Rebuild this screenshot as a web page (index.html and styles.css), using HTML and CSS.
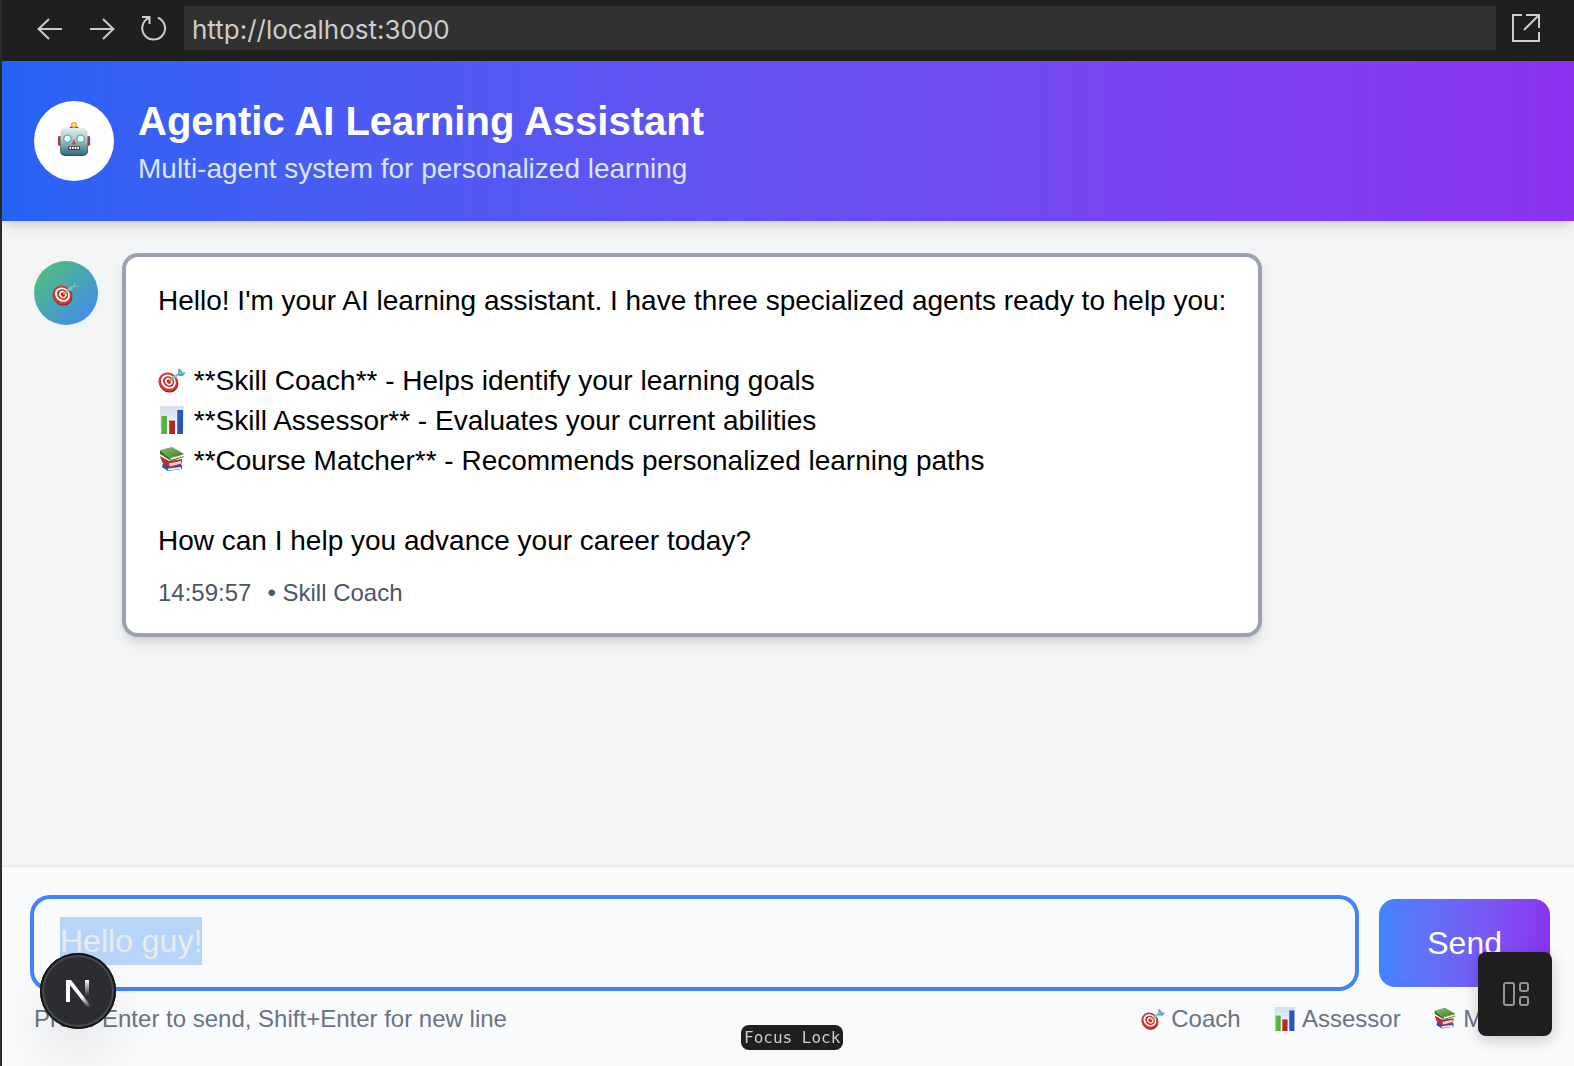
FILE: index.html
```html
<!DOCTYPE html>
<html lang="en">
<head>
<meta charset="utf-8">
<title>Agentic AI Learning Assistant</title>
<link rel="stylesheet" href="styles.css">
</head>
<body>
<svg class="sprite" aria-hidden="true">
  <defs>
    <linearGradient id="face" x1="0" y1="0" x2="0" y2="1"><stop offset="0" stop-color="#e0f0ec"/><stop offset=".45" stop-color="#a5c5c8"/><stop offset="1" stop-color="#2f6b78"/></linearGradient>
    <linearGradient id="sheet" x1="0" y1="0" x2="0" y2="1"><stop offset="0" stop-color="#d5e0ec"/><stop offset="1" stop-color="#fafcff"/></linearGradient>
    <linearGradient id="cover" x1="0" y1="0" x2="1" y2="1"><stop offset="0" stop-color="#8ac26c"/><stop offset="1" stop-color="#377b28"/></linearGradient>
    <radialGradient id="bulb"><stop offset="0" stop-color="#fff5a0"/><stop offset="1" stop-color="#f09a28"/></radialGradient>
    <linearGradient id="diag" gradientUnits="userSpaceOnUse" x1="28" y1="30" x2="50" y2="54"><stop offset=".6" stop-color="#fff"/><stop offset="1" stop-color="#fff" stop-opacity="0"/></linearGradient>
    <linearGradient id="stem" x1="0" y1="0" x2="0" y2="1"><stop offset="0" stop-color="#fff"/><stop offset="1" stop-color="#fff" stop-opacity="0"/></linearGradient>
  </defs>
  <symbol id="robot" viewBox="0 0 32 34">
    <ellipse cx="16" cy="6" rx="4.400" ry="2" fill="#5c4580"/>
    <circle cx="16" cy="3" r="3" fill="url(#bulb)"/>
    <rect x="0" y="14" width="4" height="10" rx="1.400" fill="#b8323a"/>
    <rect x="28" y="14" width="4" height="10" rx="1.400" fill="#b8323a"/>
    <rect x="2" y="13" width="28" height="21" rx="5" fill="#265965"/>
    <rect x="2.400" y="6" width="27.200" height="27" rx="5" fill="url(#face)"/>
    <circle cx="9.400" cy="16.800" r="4.400" fill="#4fb0cf"/><circle cx="22.600" cy="16.800" r="4.400" fill="#4fb0cf"/>
    <circle cx="9.400" cy="16.800" r="3" fill="#fff"/><circle cx="22.600" cy="16.800" r="3" fill="#fff"/>
    <path d="M16 17 18.500 22.500h-5z" fill="#cc4a43"/>
    <rect x="10" y="24" width="12" height="4" rx="1.500" fill="#41302f"/>
    <path d="M11.400 24.700h1.800v2.400h-1.800zM14 24.700h1.800v2.400H14zM16.600 24.700h1.800v2.400h-1.800zM19.200 24.700H21v2.400h-1.800z" fill="#fff"/>
  </symbol>
  <symbol id="target" viewBox="0 0 28 28">
    <ellipse cx="10.600" cy="17" rx="10" ry="9.300" transform="rotate(38 10.600 17)" fill="#8f1b20"/>
    <ellipse cx="10.200" cy="16" rx="10" ry="9.200" transform="rotate(38 10.200 16)" fill="#d03a36"/>
    <ellipse cx="10.400" cy="15.600" rx="7.800" ry="6.800" transform="rotate(38 10.400 15.600)" fill="#fff"/>
    <ellipse cx="10.600" cy="15.600" rx="5.900" ry="5.100" transform="rotate(38 10.600 15.600)" fill="#c92f30"/>
    <ellipse cx="10.800" cy="15.600" rx="4" ry="3.300" transform="rotate(38 10.800 15.600)" fill="#fff"/>
    <ellipse cx="10.900" cy="15.600" rx="2.400" ry="2" transform="rotate(38 10.900 15.600)" fill="#c32a2d"/>
    <path d="m11.500 15.300 5.400-4.500" stroke="#d9a03d" stroke-width="1.800"/>
    <path d="m15.300 13.600-1.500-2.200 6.600-5L22 8.700z" fill="#70cbd0"/>
    <path d="m20 7.200.7-5L23.400 4l.6 2.100 3.800.5-2.600 3.200-4 .1z" fill="#4e9ca7"/>
    <path d="m20.700 8 6-1.400M21 7.700l2-4" stroke="#9adce0" stroke-width=".8"/>
  </symbol>
  <symbol id="chart" viewBox="0 0 28 28">
    <path d="M2 0h24v28H2z" fill="url(#sheet)"/>
    <path d="M2 5h24M2 10h24M2 15h24M2 20h24" stroke="#d4dfe8" stroke-width=".6"/>
    <path d="M3 10h6v18H3z" fill="#55b33b"/><path d="M11 14.600h6V28h-6z" fill="#b32724"/><path d="M19 4h6v24h-6z" fill="#2559b5"/>
    <path d="M3 10h1v18H3z" fill="#82ce65"/><path d="M11 14.600h1V28h-1z" fill="#d34b3d"/><path d="M19 4h1v24h-1z" fill="#4b83cf"/>
  </symbol>
  <symbol id="books" viewBox="0 0 28 28">
    <path d="m5 17 12 2 7 0v4l-14 2-6-4z" fill="#2d529b"/>
    <path d="m10 22.500 13-1.500v2l-13 1.500z" fill="#e9edf5"/>
    <path d="m2 10 9 5 13-2v2l-1 4-12 3-7-6z" fill="#b72e35"/>
    <path d="m11 17.500 12-2.500v2.500L12 20.500z" fill="#e8e6e8"/>
    <path d="m12 19 11-2.500" stroke="#b4b1bb" stroke-width=".6"/>
    <path d="m2 4 10 8 13-4v2l1 1-13 4L2 8z" fill="#396f27"/>
    <path d="m12.500 12 12.500-3.500v2l-12.500 3.500z" fill="#f5f3df"/>
    <path d="M2 4 14 1l12 7-14 4z" fill="url(#cover)"/>
  </symbol>
</svg>

<div class="window">
  <nav class="toolbar" aria-label="Browser">
    <button class="tool" type="button" aria-label="Back"><svg width="32" height="32" viewBox="0 0 32 32"><path d="M28 17H4.600M15 7 4.600 17 15 27"/></svg></button>
    <button class="tool" type="button" aria-label="Forward"><svg width="32" height="32" viewBox="0 0 32 32"><path d="M4 17h23.400M17 7l10.400 10L17 27"/></svg></button>
    <button class="tool" type="button" aria-label="Reload"><svg width="32" height="32" viewBox="0 0 32 32"><path d="M4 5h7.500v7M11.500 5.600A11.400 11.400 0 1 0 19.800 5.600"/></svg></button>
    <input class="address" type="text" aria-label="Address" value="http://localhost:3000">
    <button class="tool tool-open" type="button" aria-label="Open in browser"><svg width="32" height="32" viewBox="0 0 32 32"><path d="M12 3H3v26h26V20M16 3h13v13M28.500 3.500 14 18"/></svg></button>
  </nav>

  <div class="app">
    <header class="banner">
      <span class="logo"><svg width="32" height="34"><use href="#robot"/></svg></span>
      <div>
        <h1 class="title">Agentic AI Learning Assistant</h1>
        <p class="subtitle">Multi-agent system for personalized learning</p>
      </div>
    </header>

    <main class="messages">
      <article class="message">
        <span class="avatar"><svg class="emoji"><use href="#target"/></svg></span>
        <div class="bubble">
          <p>Hello! I'm your AI learning assistant. I have three specialized agents ready to help you:</p>
          <ul class="agents">
            <li><svg class="emoji"><use href="#target"/></svg> **Skill Coach** - Helps identify your learning goals</li>
            <li><svg class="emoji"><use href="#chart"/></svg> **Skill Assessor** - Evaluates your current abilities</li>
            <li><svg class="emoji"><use href="#books"/></svg> **Course Matcher** - Recommends personalized learning paths</li>
          </ul>
          <p>How can I help you advance your career today?</p>
          <footer class="meta"><time>14:59:57</time><span>• Skill Coach</span></footer>
        </div>
      </article>
    </main>

    <form class="composer">
      <div class="entry">
        <textarea class="prompt" id="prompt" rows="1" aria-label="Message" autofocus>Hello guy!</textarea>
        <button class="send" type="button">Send</button>
      </div>
      <div class="hints">
        <span>Press Enter to send, Shift+Enter for new line</span>
        <ul class="legend">
          <li><svg class="emoji"><use href="#target"/></svg> Coach</li>
          <li><svg class="emoji"><use href="#chart"/></svg> Assessor</li>
          <li><svg class="emoji"><use href="#books"/></svg> Matcher</li>
        </ul>
      </div>
    </form>
  </div>
</div>

<button class="dev-badge" type="button" aria-label="Developer tools">
  <svg width="76" height="76" viewBox="0 0 76 76"><path d="M26 27h5l20 26-3 2-22-28z" fill="url(#diag)"/><path d="M26 27h4v22h-4z" fill="#fff"/><path d="M45 27h4v16h-4z" fill="url(#stem)"/></svg>
</button>
<span class="focus-lock">Focus Lock</span>
<button class="layout-toggle" type="button" aria-label="Layout">
  <svg width="28" height="28" viewBox="0 0 28 28"><rect x="3" y="3" width="10" height="22" rx="2"/><rect x="19" y="3" width="8" height="8" rx="2"/><rect x="19" y="17" width="8" height="8" rx="2"/></svg>
</button>
<script src="script.js"></script>
</body>
</html>
```
FILE: styles.css
```css
* { box-sizing: border-box; margin: 0; padding: 0; }

body {
  font-family: "Liberation Sans", Arial, sans-serif;
  background: #f3f4f6;
  color: #000;
}

button, input, textarea { font: inherit; border: 0; outline: 0; }
button { cursor: pointer; }
ul { list-style: none; }

.sprite { position: absolute; width: 0; height: 0; }
.emoji { width: 1em; height: 1em; vertical-align: -4px; }

.window {
  display: flex;
  flex-direction: column;
  min-height: 100vh;
  border-left: 2px solid #2b2b2b;
}

.toolbar {
  display: flex;
  align-items: center;
  padding: 6px 32px 11px 32px;
  background: #1f1f1f;
}
.tool {
  display: flex;
  width: 32px;
  margin-right: 20px;
  background: none;
}
.tool svg { fill: none; stroke: #ccc; stroke-width: 2; }
.tool-open { margin: 0 0 0 14px; }
.address {
  flex: 1;
  min-width: 0;
  height: 44px;
  margin-left: -6px;
  padding: 2px 8px 0;
  background: #313131;
  color: #ccc;
  font: 26px/42px Inter, "Liberation Sans", sans-serif;
}

.app { flex: 1; display: flex; flex-direction: column; }

.banner {
  display: flex;
  align-items: center;
  gap: 24px;
  padding: 32px;
  background: linear-gradient(to right in oklab, #2563f4, #8c33f0);
  box-shadow: 0 8px 12px -2px rgba(0, 0, 0, .1), 0 4px 8px -4px rgba(0, 0, 0, .1);
  color: #fff;
}
.logo, .avatar {
  display: flex;
  align-items: center;
  justify-content: center;
  flex: none;
  border-radius: 50%;
}
.logo { width: 80px; height: 80px; padding-bottom: 4px; background: #fff; }
.title { font-size: 40px; line-height: 56px; }
.subtitle { font-size: 28px; line-height: 40px; color: #dbe6fd; }

.messages { flex: 1; padding: 32px; }
.message { display: flex; align-items: flex-start; gap: 24px; }
.avatar {
  width: 64px;
  height: 64px;
  margin-top: 8px;
  font-size: 28px;
  background: linear-gradient(135deg, #4fc56f, #4184fa);
}
.bubble {
  padding: 24px 32px;
  border: 4px solid #9ba1b0;
  border-radius: 16px;
  background: #fff;
  box-shadow: 0 8px 12px -2px rgba(0, 0, 0, .1), 0 4px 8px -4px rgba(0, 0, 0, .1);
  font-size: 28px;
  line-height: 40px;
}
.agents { margin: 40px 0; }
.meta {
  display: flex;
  gap: 16px;
  margin-top: 16px;
  color: #4b5565;
  font-size: 24px;
  line-height: 32px;
}

.composer {
  padding: 32px 24px 31px 32px;
  border-top: 2px solid #ebecee;
  background: #f9fafc;
}
.entry { display: flex; gap: 24px; }
.prompt {
  flex: 1;
  min-width: 0;
  height: 88px;
  padding: 18px 26px;
  border-radius: 16px;
  background: #f9fafc;
  color: #ebebeb;
  font-size: 32px;
  line-height: 48px;
  resize: none;
  overflow: hidden;
}
.prompt:focus { box-shadow: 0 0 0 4px #4083fb; }
.prompt::selection { background: #b7d4fa; color: #ebebeb; }
.send {
  padding: 0 48px;
  border-radius: 16px;
  background: linear-gradient(to right in oklab, #4083fd, #8b32f0);
  color: #fff;
  font-size: 32px;
}
.hints {
  display: flex;
  justify-content: space-between;
  margin-top: 16px;
  color: #6b7283;
  font-size: 24px;
  line-height: 32px;
}
.legend { display: flex; gap: 32px; }

.dev-badge {
  position: fixed;
  left: 40px;
  bottom: 37px;
  width: 76px;
  height: 76px;
  border-radius: 50%;
  background: #2c2d31;
  box-shadow: inset 0 0 0 2px #151515, inset 0 0 0 4px #48494c, 0 32px 64px -16px rgba(0, 0, 0, .24);
}
.focus-lock {
  position: fixed;
  left: 50%;
  bottom: 16px;
  margin-left: -46px;
  padding: 0 3px;
  border-radius: 8px;
  background: #1f1f1f;
  color: #ccc;
  font: 16px/25px "DejaVu Sans Mono", monospace;
}
.layout-toggle {
  position: fixed;
  right: 22px;
  bottom: 30px;
  display: flex;
  align-items: center;
  justify-content: center;
  width: 74px;
  height: 84px;
  border-radius: 8px;
  background: #1f1f1f;
  box-shadow: 0 4px 16px rgba(0, 0, 0, .2);
}
.layout-toggle svg { fill: none; stroke: #949494; stroke-width: 2; }
```
FILE: script.js
```js
const prompt = document.getElementById("prompt");
prompt.focus();
prompt.select();
```
